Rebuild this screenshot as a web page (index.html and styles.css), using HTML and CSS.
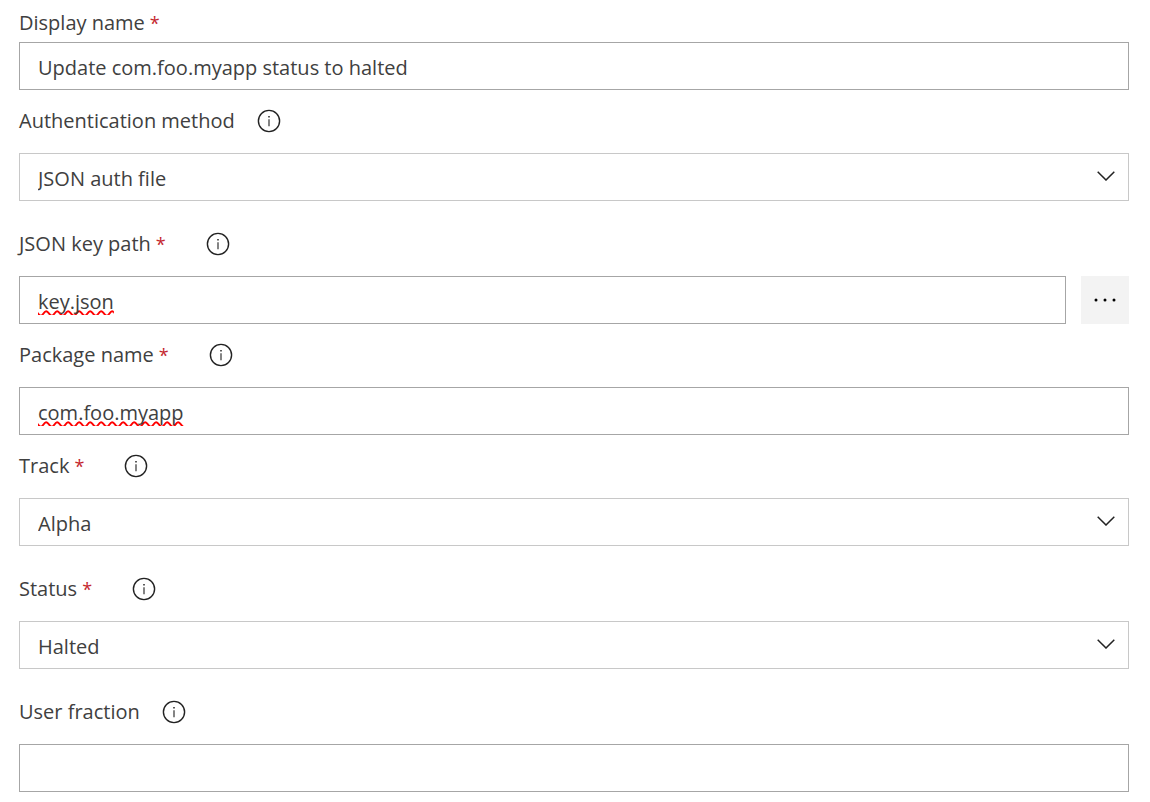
FILE: index.html
```html
<!DOCTYPE html>
<html lang="en">
  <head>
    <meta charset="UTF-8" />
    <meta name="viewport" content="width=device-width, initial-scale=1.0" />
    <title>Google Play - Status Update</title>
    <link rel="stylesheet" href="styles.css">
  </head>
  <body>
    <svg class="icon-defs" aria-hidden="true">
      <symbol id="icon-info" viewBox="0 0 24 24">
        <circle cx="12" cy="12" r="10.6" fill="none" stroke="#222222" stroke-width="1.4" />
        <path d="M11.2 7h1.6v1.5h-1.6zM11.4 10.2h1.2v7h-1.2z" fill="#333333" />
      </symbol>
      <symbol id="icon-chevron" viewBox="0 0 18 10">
        <path d="M0.7 0.7L9 9L17.3 0.7" fill="none" stroke="#222222" stroke-width="1.5" />
      </symbol>
    </svg>
    <form class="task-form">
      <div class="field">
        <div class="label-row first">
          <label for="displayName">Display name<span class="required">*</span></label>
        </div>
        <input type="text" id="displayName" value="Update com.foo.myapp status to halted" required />
      </div>

      <div class="field">
        <div class="label-row">
          <label for="authType">Authentication method</label>
          <button type="button" class="info" aria-label="About authentication method"><svg><use href="#icon-info" /></svg></button>
        </div>
        <div class="dropdown">
          <select id="authType">
            <option>JSON auth file</option>
          </select>
          <svg class="chevron"><use href="#icon-chevron" /></svg>
        </div>
      </div>

      <div class="field">
        <div class="label-row">
          <label for="keyPath">JSON key path<span class="required">*</span></label>
          <button type="button" class="info" aria-label="About JSON key path"><svg><use href="#icon-info" /></svg></button>
        </div>
        <div class="with-button">
          <input type="text" id="keyPath" class="misspelled" value="key.json" required />
          <button type="button" class="browse" aria-label="Browse">
            <svg viewBox="0 0 24 4">
              <circle cx="3" cy="2" r="1.5" />
              <circle cx="12" cy="2" r="1.5" />
              <circle cx="21" cy="2" r="1.5" />
            </svg>
          </button>
        </div>
      </div>

      <div class="field">
        <div class="label-row">
          <label for="packageName">Package name<span class="required">*</span></label>
          <button type="button" class="info" aria-label="About package name"><svg><use href="#icon-info" /></svg></button>
        </div>
        <input type="text" id="packageName" class="misspelled" value="com.foo.myapp" required />
      </div>

      <div class="field">
        <div class="label-row">
          <label for="track">Track<span class="required">*</span></label>
          <button type="button" class="info" aria-label="About track"><svg><use href="#icon-info" /></svg></button>
        </div>
        <div class="dropdown">
          <select id="track" required>
            <option>Alpha</option>
          </select>
          <svg class="chevron"><use href="#icon-chevron" /></svg>
        </div>
      </div>

      <div class="field">
        <div class="label-row">
          <label for="status">Status<span class="required">*</span></label>
          <button type="button" class="info" aria-label="About status"><svg><use href="#icon-info" /></svg></button>
        </div>
        <div class="dropdown">
          <select id="status" required>
            <option>Halted</option>
          </select>
          <svg class="chevron"><use href="#icon-chevron" /></svg>
        </div>
      </div>

      <div class="field">
        <div class="label-row">
          <label for="userFraction">User fraction</label>
          <button type="button" class="info" aria-label="About user fraction"><svg><use href="#icon-info" /></svg></button>
        </div>
        <input type="text" id="userFraction" />
      </div>
    </form>
  </body>
</html>
```
FILE: styles.css
```css
* {
  box-sizing: border-box;
}
body {
  margin: 0;
  background-color: #ffffff;
  color: #404040;
  font-family: "Segoe UI", "Open Sans", "Noto Sans", sans-serif;
  font-size: 20px;
}
.icon-defs {
  display: none;
}
.task-form {
  padding: 0 21px 10px 19px;
}
.label-row {
  display: flex;
  align-items: center;
  height: 63px;
  padding-bottom: 2px;
}
.label-row.first {
  height: 42px;
  padding-top: 4px;
}
.required {
  margin: 0 18px 0 5px;
  color: #c4262e;
  font-size: 18px;
}
.info {
  display: flex;
  margin-left: 22px;
  padding: 0;
  border: none;
  background: none;
  cursor: pointer;
}
.info svg {
  width: 24px;
  height: 24px;
}
input,
select {
  display: block;
  width: 100%;
  height: 48px;
  margin: 0;
  padding: 2px 18px 0;
  border: 1px solid #a6a6a6;
  border-radius: 0;
  background-color: #ffffff;
  color: #404040;
  font: inherit;
}
select {
  appearance: none;
  border-color: #c8c8c8;
}
.misspelled {
  text-decoration: underline wavy #ff0000 2px;
  text-decoration-skip-ink: none;
  text-underline-offset: 1px;
}
.dropdown {
  position: relative;
  margin-bottom: 12px;
}
.chevron {
  position: absolute;
  top: 18px;
  right: 14px;
  width: 18px;
  height: 10px;
  pointer-events: none;
}
.with-button {
  display: flex;
  gap: 15px;
}
.with-button input {
  flex: 1;
}
.browse {
  display: flex;
  align-items: center;
  justify-content: center;
  width: 48px;
  height: 48px;
  padding: 0;
  border: none;
  background-color: #f3f3f3;
  cursor: pointer;
}
.browse svg {
  width: 24px;
  height: 4px;
  fill: #000000;
}
```
